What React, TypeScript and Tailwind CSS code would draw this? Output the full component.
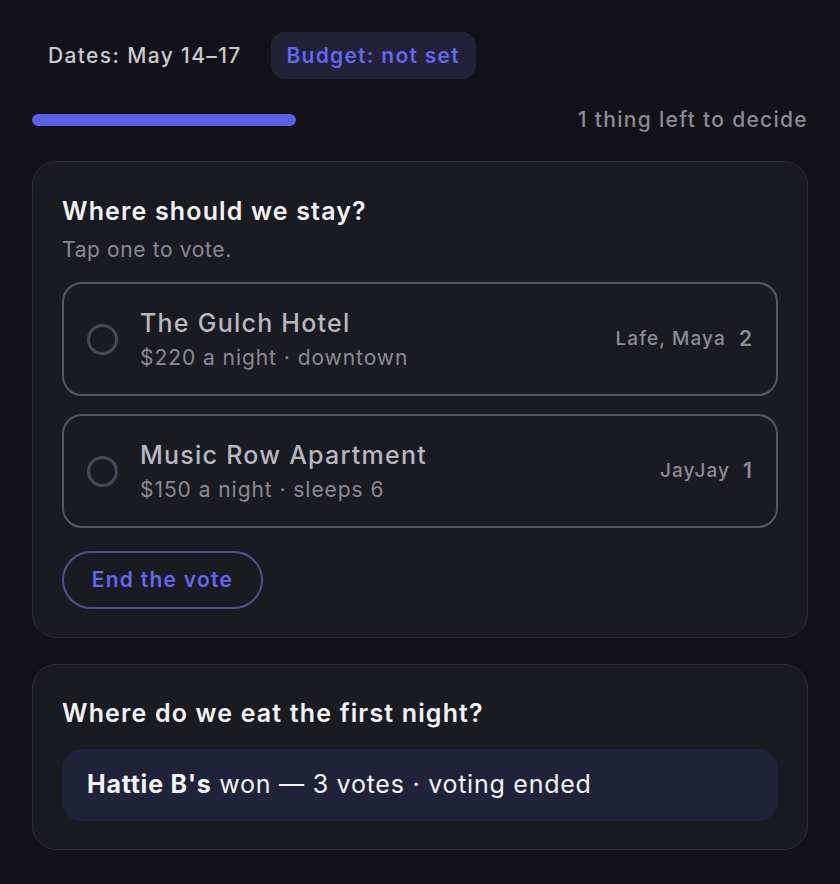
import { useState } from 'react';

const stays = [
  { id: 'gulch', name: 'The Gulch Hotel', detail: '$220 a night · downtown', voters: 'Lafe, Maya', count: 2 },
  { id: 'row', name: 'Music Row Apartment', detail: '$150 a night · sleeps 6', voters: 'JayJay', count: 1 },
];

export default function App() {
  const [picked, setPicked] = useState<string | null>(null);

  return (
    <div className="min-h-screen bg-[#121218] px-8 pt-8 pb-8 font-['Inter',sans-serif]">
      {/* chips up top */}
      <div className="flex items-center gap-[13px]">
        <span className="px-4 py-[10px] text-[21px] leading-[27px] font-medium tracking-[0.065em] text-[#c9c9cf]">
          Dates: May 14–17
        </span>
        <span className="w-[205px] rounded-[14px] bg-[#212238] py-[10px] text-center text-[21px] leading-[27px] font-semibold tracking-[0.06em] text-[#6366f1]">
          Budget: not set
        </span>
      </div>

      {/* progress */}
      <div className="mt-[27px] flex h-[28px] items-center justify-between">
        <div className="h-3 w-[264px] rounded-full bg-[#5b5fe3]" />
        <span className="text-[21px] leading-[28px] font-medium tracking-[0.062em] text-[#8c8c95]">
          1 thing left to decide
        </span>
      </div>

      {/* stay vote */}
      <section className="mt-[27px] rounded-[24px] border border-[#2c2c36] bg-[#1a1a21] px-[29px] pt-[32px] pb-[28px]">
        <h2 className="text-[25px] leading-[34px] font-semibold tracking-[0.046em] text-[#f2f2f5]">
          Where should we stay?
        </h2>
        <p className="mt-[8px] text-[21px] leading-[28px] tracking-[0.03em] text-[#8a8a93]">Tap one to vote.</p>

        <div className="mt-[18px] flex flex-col gap-[18px]">
          {stays.map((s) => (
            <button
              key={s.id}
              onClick={() => setPicked(s.id)}
              className="flex h-[114px] items-center rounded-[20px] border-2 border-[#55565f] pr-[24px] pl-[23px] text-left"
            >
              <span
                className={
                  picked === s.id
                    ? 'h-[31px] w-[31px] shrink-0 rounded-full border-[3px] border-[#6366f1] bg-[#6366f1]'
                    : 'h-[31px] w-[31px] shrink-0 rounded-full border-[3px] border-[#464858]'
                }
              />
              <span className="ml-[22px] flex-1">
                <span className="block text-[25px] leading-[36px] font-medium tracking-[0.05em] text-[#b8b8bf]">
                  {s.name}
                </span>
                <span className="mt-[2px] block text-[21px] leading-[30px] tracking-[0.045em] text-[#8a8a93]">
                  {s.detail}
                </span>
              </span>
              <span className="text-[19px] font-medium tracking-[0.058em] text-[#8c8c95]">{s.voters}</span>
              <span className="ml-[13px] text-[21px] font-semibold text-[#8c8c95]">{s.count}</span>
            </button>
          ))}
        </div>

        <button className="mt-[23px] h-[58px] w-[201px] rounded-full border-2 border-[#4e5190] text-[21px] font-semibold tracking-[0.06em] text-[#6366f1]">
          End the vote
        </button>
      </section>

      {/* dinner vote */}
      <section className="mt-[26px] rounded-[24px] border border-[#2c2c36] bg-[#1a1a21] px-[29px] pt-[31px] pb-[28px]">
        <h2 className="text-[25px] leading-[34px] font-semibold tracking-[0.046em] text-[#f2f2f5]">
          Where do we eat the first night?
        </h2>
        <div className="mt-[19px] flex h-[72px] items-center rounded-[20px] bg-[#20223a] px-[25px] text-[25px] tracking-[0.03em] text-[#f2f2f5]">
          <span>
            <b className="font-bold">Hattie B's</b> won — 3 votes · voting ended
          </span>
        </div>
      </section>
    </div>
  );
}
